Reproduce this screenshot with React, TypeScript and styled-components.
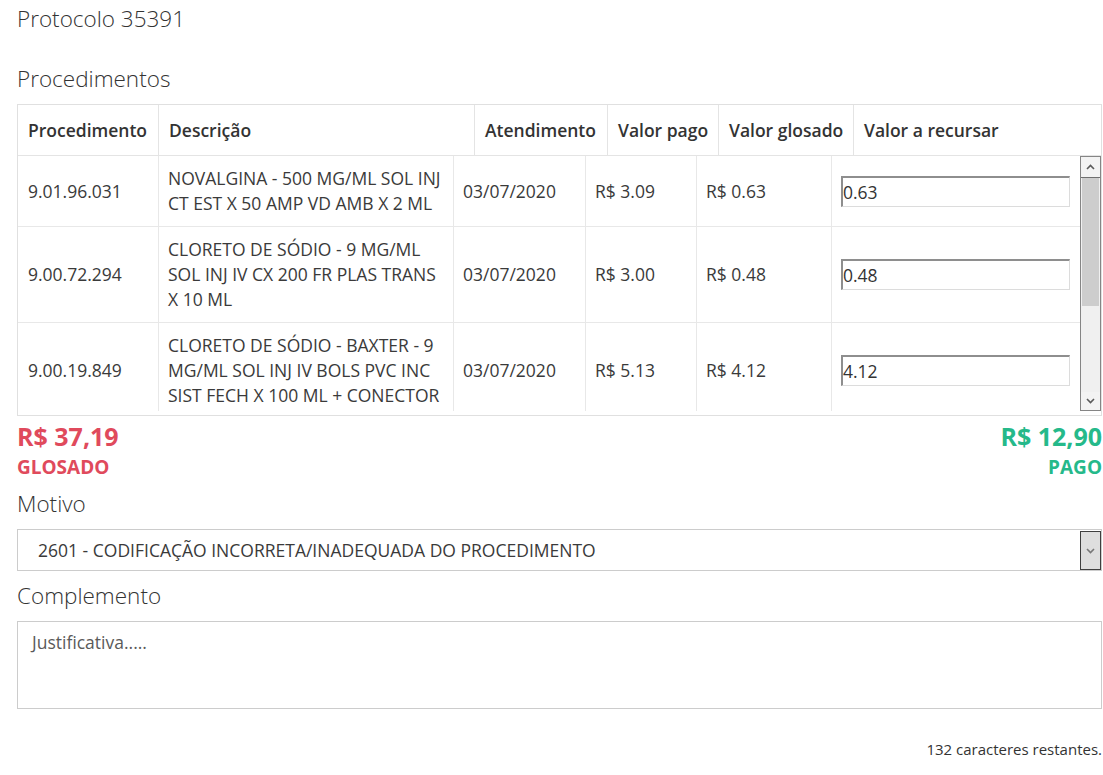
import React from "react";
import styled, { createGlobalStyle } from "styled-components";

const GlobalStyle = createGlobalStyle`
  html, body { margin: 0; padding: 0; background: #fff; }
  body { font-family: "Open Sans", "Liberation Sans", Arial, sans-serif; color: #333; }
  * { box-sizing: border-box; }
`;

const Page = styled.div`
  padding: 4px 1px 16px 17px;
  display: flex;
  flex-direction: column;
`;

const Heading = styled.h2<{ $top?: number }>`
  margin: ${(p) => p.$top ?? 0}px 0 0 0;
  font-size: 22.5px;
  line-height: 30px;
  font-weight: 300;
  color: #333;
`;

const TableFrame = styled.div`
  margin-top: 10px;
  border: 1px solid #e0e0e0;
  padding-bottom: 4px;
`;

const headCols = "140px 316px 133px 111px 135px 1fr";
const bodyCols = "140px 295px 132px 111px 135px 1fr";

const HeadRow = styled.div`
  display: grid;
  grid-template-columns: ${headCols};
  border-bottom: 1px solid #e4e4e4;
`;

const HeadCell = styled.div`
  padding: 13px 10px 12px 10px;
  font-size: 17.5px;
  line-height: 25px;
  font-weight: 600;
  color: #333;
  white-space: nowrap;
  & + & { border-left: 1px solid #e4e4e4; }
`;

const BodyArea = styled.div`
  display: flex;
  height: 255px;
`;

const Rows = styled.div`
  flex: 1;
  overflow: hidden;
`;

const Row = styled.div`
  display: grid;
  grid-template-columns: ${bodyCols};
  border-bottom: 1px solid #e8e8e8;
`;

const Cell = styled.div`
  display: flex;
  align-items: center;
  padding: 10px;
  font-size: 17.5px;
  line-height: 25px;
  color: #3a3a3a;
  & + & {
    border-left: 1px solid #e8e8e8;
    padding-left: 9px;
  }
`;

const ValueInput = styled.input`
  width: 100%;
  height: 31px;
  padding: 1px 1px 1px 0;
  font-family: inherit;
  font-size: 17.5px;
  color: #333;
  background: #fff;
  border-style: solid;
  border-width: 2px 1px 1px 2px;
  border-color: #8e8e8e #dcdcdc #dcdcdc #8e8e8e;
  outline: none;
`;

const ScrollTrack = styled.div`
  width: 21px;
  display: flex;
  flex-direction: column;
  background: #f0f0f0;
  border: 1px solid #858585;
`;

const ScrollButton = styled.div<{ $down?: boolean }>`
  height: ${(p) => (p.$down ? 18 : 21)}px;
  display: flex;
  align-items: center;
  justify-content: center;
  background: #f3f3f3;
  border-bottom: ${(p) => (p.$down ? "none" : "1px solid #6f6f6f")};
  margin-top: ${(p) => (p.$down ? "auto" : "0")};
`;

const Thumb = styled.div`
  height: 128px;
  margin: 0 1px;
  background: #cdcdcd;
`;

const Totals = styled.div`
  display: flex;
  justify-content: space-between;
  margin-top: 5px;
`;

const TotalBlock = styled.div<{ $color: string; $right?: boolean }>`
  display: flex;
  flex-direction: column;
  align-items: ${(p) => (p.$right ? "flex-end" : "flex-start")};
  color: ${(p) => p.$color};
  font-weight: 700;
`;

const Amount = styled.div`
  font-size: 25px;
  line-height: 30px;
`;

const AmountLabel = styled.div`
  margin-top: 4px;
  font-size: 19px;
  line-height: 24px;
`;

const SelectWrap = styled.div`
  position: relative;
  margin-top: 10px;
  height: 42px;
`;

const Select = styled.select`
  appearance: none;
  -webkit-appearance: none;
  width: 100%;
  height: 42px;
  padding: 0 30px 0 20px;
  border: 1px solid #cccccc;
  border-radius: 0;
  background: #fff;
  font-family: inherit;
  font-size: 17.5px;
  color: #3a3a3a;
  outline: none;
`;

const SelectArrow = styled.span`
  position: absolute;
  top: 2px;
  right: 1px;
  width: 21px;
  height: 39px;
  display: flex;
  align-items: center;
  justify-content: center;
  background: #dedede;
  border: 1px solid #3f3f3f;
  pointer-events: none;
`;

const TextArea = styled.textarea`
  margin-top: 10px;
  width: 100%;
  height: 88px;
  padding: 9px 14px;
  border: 1px solid #cccccc;
  font-family: inherit;
  font-size: 17.5px;
  line-height: 22px;
  color: #333;
  resize: none;
  outline: none;
  &::placeholder { color: #5a5a5a; }
`;

const Counter = styled.div`
  margin-top: 30px;
  text-align: right;
  font-size: 15px;
  line-height: 20px;
  color: #333;
`;

const Chevron = ({ up, color = "#5a5a5a" }: { up?: boolean; color?: string }) => (
  <svg width="9" height="6" viewBox="0 0 9 6">
    <path
      d={up ? "M1 5 L4.5 1.5 L8 5" : "M1 1 L4.5 4.5 L8 1"}
      fill="none"
      stroke={color}
      strokeWidth="1.6"
    />
  </svg>
);

type Item = {
  code: string;
  desc: string;
  date: string;
  paid: string;
  glosa: string;
  value: string;
};

const items: Item[] = [
  {
    code: "9.01.96.031",
    desc: "NOVALGINA - 500 MG/ML SOL INJ CT EST X 50 AMP VD AMB X 2 ML",
    date: "03/07/2020",
    paid: "R$ 3.09",
    glosa: "R$ 0.63",
    value: "0.63",
  },
  {
    code: "9.00.72.294",
    desc: "CLORETO DE SÓDIO - 9 MG/ML SOL INJ IV CX 200 FR PLAS TRANS X 10 ML",
    date: "03/07/2020",
    paid: "R$ 3.00",
    glosa: "R$ 0.48",
    value: "0.48",
  },
  {
    code: "9.00.19.849",
    desc: "CLORETO DE SÓDIO - BAXTER - 9 MG/ML SOL INJ IV BOLS PVC INC SIST FECH X 100 ML + CONECTOR",
    date: "03/07/2020",
    paid: "R$ 5.13",
    glosa: "R$ 4.12",
    value: "4.12",
  },
];

const headers = [
  "Procedimento",
  "Descrição",
  "Atendimento",
  "Valor pago",
  "Valor glosado",
  "Valor a recursar",
];

export default function App() {
  return (
    <>
      <GlobalStyle />
      <Page>
        <Heading>Protocolo 35391</Heading>
        <Heading $top={30}>Procedimentos</Heading>
        <TableFrame>
          <HeadRow>
            {headers.map((h) => (
              <HeadCell key={h}>{h}</HeadCell>
            ))}
          </HeadRow>
          <BodyArea>
            <Rows>
              {items.map((it) => (
                <Row key={it.code}>
                  <Cell>{it.code}</Cell>
                  <Cell>{it.desc}</Cell>
                  <Cell>{it.date}</Cell>
                  <Cell>{it.paid}</Cell>
                  <Cell>{it.glosa}</Cell>
                  <Cell>
                    <ValueInput defaultValue={it.value} />
                  </Cell>
                </Row>
              ))}
            </Rows>
            <ScrollTrack>
              <ScrollButton>
                <Chevron up />
              </ScrollButton>
              <Thumb />
              <ScrollButton $down>
                <Chevron />
              </ScrollButton>
            </ScrollTrack>
          </BodyArea>
        </TableFrame>
        <Totals>
          <TotalBlock $color="#e04a5c">
            <Amount>R$ 37,19</Amount>
            <AmountLabel>GLOSADO</AmountLabel>
          </TotalBlock>
          <TotalBlock $color="#25b98a" $right>
            <Amount>R$ 12,90</Amount>
            <AmountLabel>PAGO</AmountLabel>
          </TotalBlock>
        </Totals>
        <Heading $top={10}>Motivo</Heading>
        <SelectWrap>
          <Select defaultValue="2601">
            <option value="2601">2601 - CODIFICAÇÃO INCORRETA/INADEQUADA DO PROCEDIMENTO</option>
          </Select>
          <SelectArrow>
            <Chevron color="#777" />
          </SelectArrow>
        </SelectWrap>
        <Heading $top={10}>Complemento</Heading>
        <TextArea placeholder="Justificativa....." />
        <Counter>132 caracteres restantes.</Counter>
      </Page>
    </>
  );
}
